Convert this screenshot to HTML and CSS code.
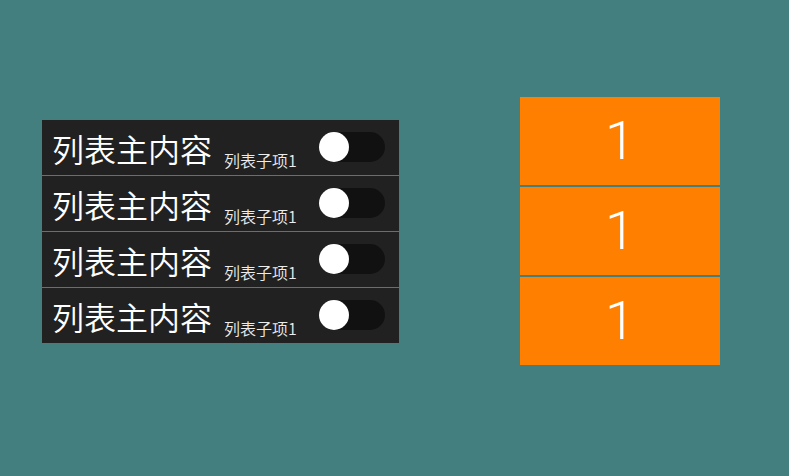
FILE: index.html
```html
<!DOCTYPE html>
<html lang="zh">
<head>
<meta charset="utf-8">
<link rel="stylesheet" href="styles.css">
</head>
<body>
<div class="page">
  <div class="list">
    <div class="row"><span class="main">列表主内容</span><span class="sub">列表子项1</span><span class="toggle"><span class="knob"></span></span></div>
    <div class="row"><span class="main">列表主内容</span><span class="sub">列表子项1</span><span class="toggle"><span class="knob"></span></span></div>
    <div class="row"><span class="main">列表主内容</span><span class="sub">列表子项1</span><span class="toggle"><span class="knob"></span></span></div>
    <div class="row"><span class="main">列表主内容</span><span class="sub">列表子项1</span><span class="toggle"><span class="knob"></span></span></div>
  </div>
  <div class="tiles">
    <div class="tile">1</div>
    <div class="tile">1</div>
    <div class="tile">1</div>
  </div>
</div>
</body>
</html>
```
FILE: styles.css
```css
html, body {
  margin: 0;
  padding: 0;
  background: #437f7f;
}
body {
  font-family: "Noto Sans CJK SC", "Noto Sans", sans-serif;
  color: #fff;
}
.page {
  width: 789px;
  height: 476px;
  box-sizing: border-box;
  padding: 0 0 14px 42px;
  display: flex;
  align-items: center;
  gap: 121px;
}
.list {
  width: 357px;
  display: flex;
  flex-direction: column;
  gap: 1px;
}
.row {
  height: 55px;
  background: #212121;
  display: flex;
  align-items: center;
  padding: 0 14px 0 10px;
}
.main {
  font-size: 32px;
  line-height: 1;
  font-weight: 350;
  position: relative;
  top: 1px;
}
.sub {
  font-size: 16px;
  line-height: 1;
  font-weight: 350;
  color: #ececec;
  margin-left: 12px;
  align-self: flex-end;
  margin-bottom: 7px;
}
.toggle {
  margin-left: auto;
  width: 66px;
  height: 30px;
  border-radius: 15px;
  background: #111;
  display: flex;
  align-items: center;
}
.knob {
  width: 30px;
  height: 30px;
  border-radius: 50%;
  background: #fff;
}
.tiles {
  width: 200px;
  display: flex;
  flex-direction: column;
  gap: 2px;
}
.tile {
  height: 88px;
  background: #ff8000;
  display: flex;
  align-items: center;
  justify-content: center;
  font-family: Roboto, "Noto Sans", sans-serif;
  font-size: 54px;
  font-weight: 300;
  line-height: 1;
}
```
